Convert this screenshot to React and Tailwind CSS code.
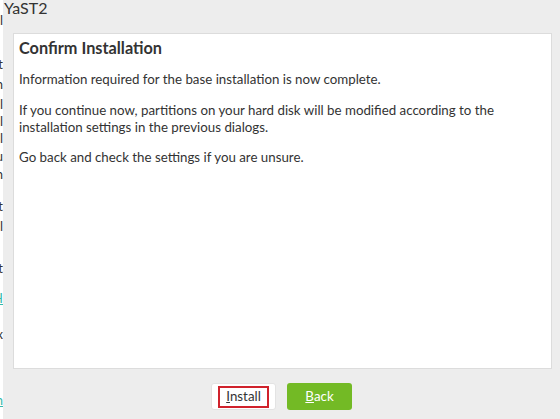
import React from "react";

const fragments = [
  { top: 14, text: "l", cls: "text-[#333]" },
  { top: 58, text: "t", cls: "text-[#333]" },
  { top: 78, text: "n", cls: "text-[#333]" },
  { top: 98, text: "l", cls: "text-[#333]" },
  { top: 115, text: "l", cls: "text-[#333]" },
  { top: 132, text: "l", cls: "text-[#333]" },
  { top: 150, text: "u", cls: "text-[#333]" },
  { top: 168, text: "n", cls: "text-[#333]" },
  { top: 200, text: "t", cls: "text-[#333]" },
  { top: 220, text: "l", cls: "text-[#333]" },
  { top: 262, text: "t", cls: "text-[#333]" },
  { top: 292, text: "H", cls: "text-[#35b9ab] underline" },
  { top: 328, text: "x", cls: "text-[#333]" },
  { top: 394, text: "n", cls: "text-[#35b9ab] underline" },
];

const App = () => {
  return (
    <div
      className="w-[560px] h-[419px] flex overflow-hidden bg-[#ededed]"
      style={{ fontFamily: "Lato, 'Liberation Sans', sans-serif" }}
    >
      {/* window behind */}
      <div className="w-[3px] h-full bg-white relative overflow-hidden">
        {fragments.map((f, i) => (
          <div
            key={i}
            className={`absolute right-0 text-[13px] leading-none whitespace-nowrap ${f.cls}`}
            style={{ top: f.top }}
          >
            {f.text}
          </div>
        ))}
      </div>

      <div className="flex-1 flex flex-col">
        <div className="h-[33px] pl-[1px] text-[16px] leading-[16px] text-[#333]">
          YaST2
        </div>

        <div className="ml-[10px] mr-[8px] h-[336px] bg-white border border-[#dcdcdc] px-[5px] pt-[4px] text-[#333]">
          <h1 className="text-[16.3px] font-bold leading-[20px] mb-[13px]">
            Confirm Installation
          </h1>
          <p className="text-[13.3px] leading-[17px] mb-[14px]">
            Information required for the base installation is now complete.
          </p>
          <p className="text-[13.3px] leading-[17px] mb-[13px]">
            If you continue now, partitions on your hard disk will be modified according to the
            <br />
            installation settings in the previous dialogs.
          </p>
          <p className="text-[13.3px] leading-[17px]">
            Go back and check the settings if you are unsure.
          </p>
        </div>

        <div className="flex justify-center gap-[11px] pt-[14px]">
          <button className="w-[65px] h-[27px] bg-white border border-[#e3e3e3] rounded-[3px] flex items-center justify-center">
            <span className="w-[51px] h-[22px] border-2 border-[#d0222c] flex items-center justify-center text-[13.3px] text-[#333]">
              <span className="underline">I</span>nstall
            </span>
          </button>
          <button className="w-[65px] h-[27px] bg-[#73ba25] rounded-[3px] text-white text-[13.3px] flex items-center justify-center">
            <span className="underline">B</span>ack
          </button>
        </div>
      </div>
    </div>
  );
};

export default App;
